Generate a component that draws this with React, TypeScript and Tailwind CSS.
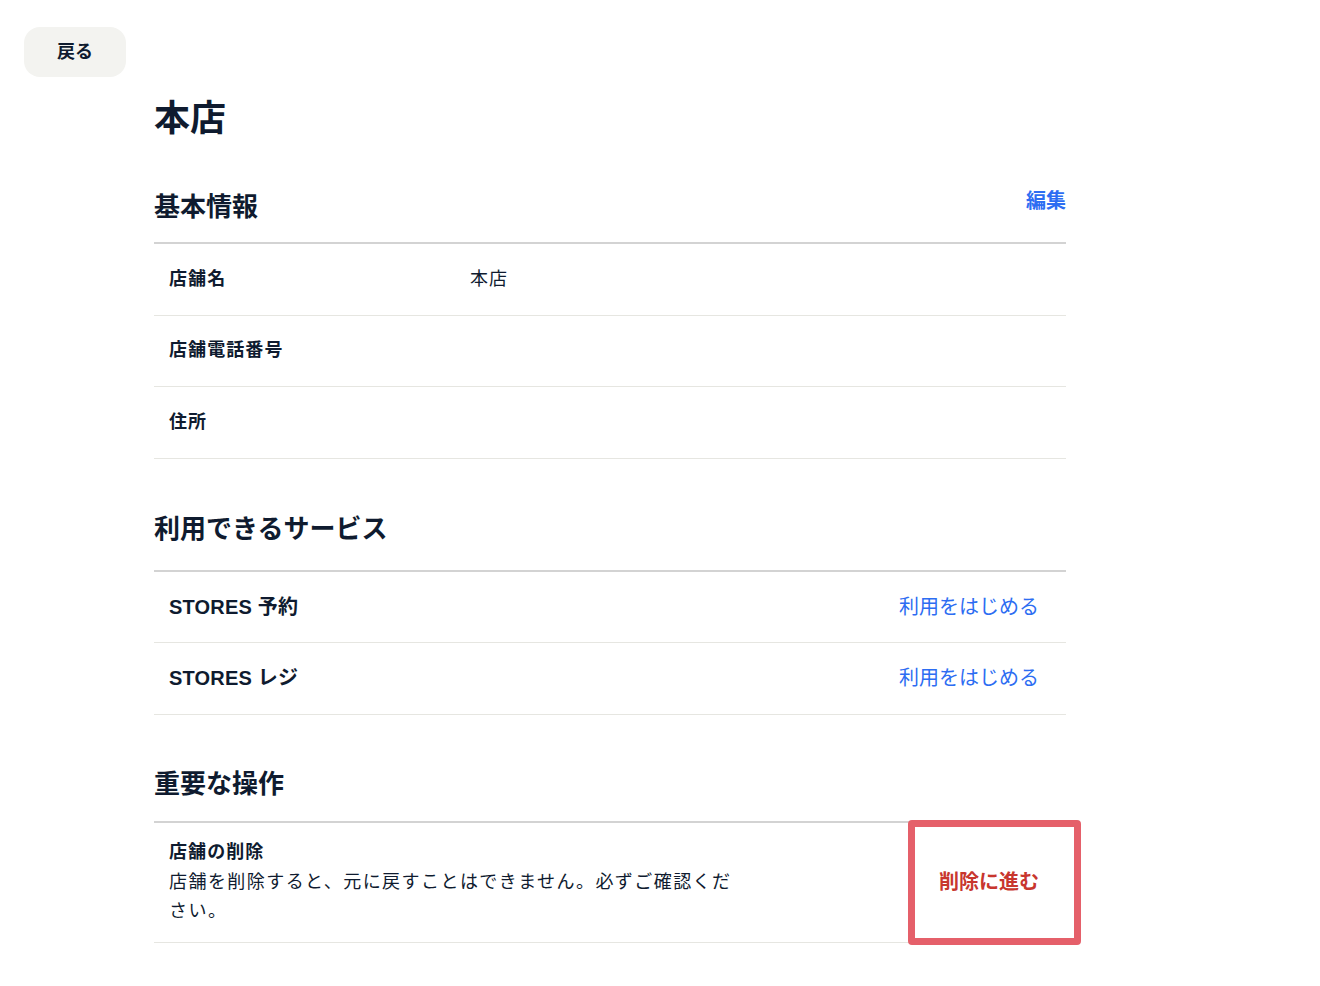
const font = { fontFamily: '"Liberation Sans", "Noto Sans CJK JP", sans-serif' }

function InfoRow({ label, value }: { label: string; value?: string }) {
  return (
    <div className="flex h-[71.5px] items-center border-b border-[#e6e6e1] pl-[15px]">
      <div className="w-[301px] text-[18px] font-bold tracking-[0.06em]">{label}</div>
      {value && <div className="text-[18px] tracking-[0.06em]">{value}</div>}
    </div>
  )
}

function ServiceRow({ name }: { name: string }) {
  return (
    <div className="flex h-[71.5px] items-center justify-between border-b border-[#e6e6e1] pl-[15px] pr-[27px]">
      <div className="text-[20px] font-bold tracking-[0.01em]">{name}</div>
      <button className="text-[20px] text-[#2d6df2]">利用をはじめる</button>
    </div>
  )
}

export default function App() {
  return (
    <div className="min-h-screen bg-white pl-[24px] pt-[27px] text-[#0f1b2f]" style={font}>
      <button className="h-[50px] w-[102px] rounded-[16px] bg-[#f3f3f0] text-[18px] font-bold">
        戻る
      </button>

      <div className="ml-[130px] w-[912px]">
        <h1 className="mt-[15px] text-[36px] font-bold leading-[54px]">本店</h1>

        {/* 基本情報 */}
        <div className="mt-[42px] flex items-start justify-between border-b-2 border-[#d3d3d3] pb-[15px]">
          <h2 className="text-[26px] font-bold leading-[39px]">基本情報</h2>
          <button className="-mt-[2px] text-[20px] font-bold leading-[30px] text-[#2d6df2]">編集</button>
        </div>
        <InfoRow label="店舗名" value="本店" />
        <InfoRow label="店舗電話番号" />
        <InfoRow label="住所" />

        {/* 利用できるサービス */}
        <div className="mt-[51px] border-b-2 border-[#d3d3d3] pb-[21px]">
          <h2 className="text-[26px] font-bold leading-[39px]">利用できるサービス</h2>
        </div>
        <ServiceRow name="STORES 予約" />
        <ServiceRow name="STORES レジ" />

        {/* 重要な操作 */}
        <div className="mt-[50px] border-b-2 border-[#d3d3d3] pb-[17px]">
          <h2 className="text-[26px] font-bold leading-[39px]">重要な操作</h2>
        </div>
        <div className="relative flex items-center justify-between border-b border-[#e6e6e1] py-[15.5px] pl-[15px] pr-[27px]">
          <div className="w-[572px] text-[18px] leading-[29.5px] tracking-[0.08em]">
            <div className="font-bold tracking-[0.06em]">店舗の削除</div>
            <div>店舗を削除すると、元に戻すことはできません。必ずご確認ください。</div>
          </div>
          <button className="text-[20px] font-bold text-[#c8362e]">削除に進む</button>
          <div className="pointer-events-none absolute left-[754px] top-[-3px] h-[125px] w-[173px] rounded-[4px] border-[7px] border-[#e5606a]" />
        </div>
      </div>
    </div>
  )
}
